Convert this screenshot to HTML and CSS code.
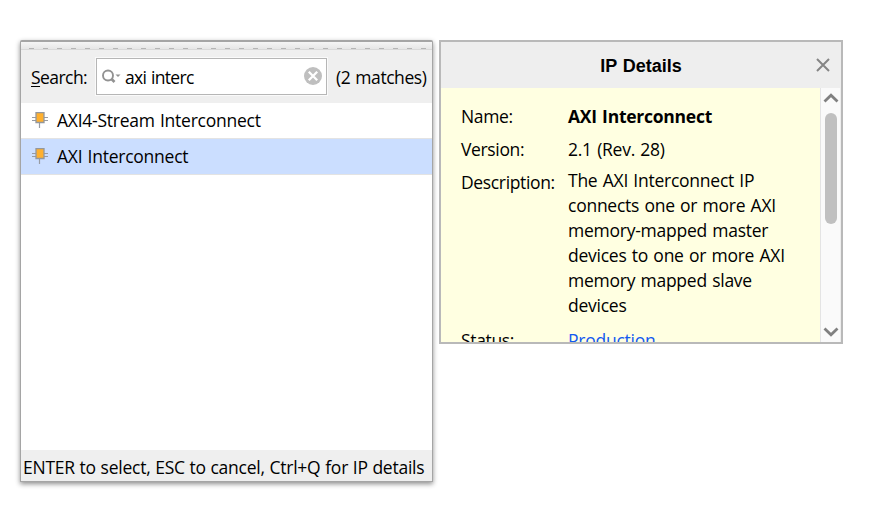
FILE: index.html
```html
<!DOCTYPE html>
<html lang="en">
<head>
<meta charset="utf-8">
<title>IP Catalog Search</title>
<link rel="stylesheet" href="styles.css">
</head>
<body>
<main class="workspace">
  <section class="finder">
    <div class="grip"></div>
    <div class="search-bar">
      <label class="search-label"><u>S</u>earch:</label>
      <div class="search-field">
        <svg class="search-icon" width="20" height="16" viewBox="0 0 20 16"><circle cx="6" cy="6.5" r="5" fill="none" stroke="#929292" stroke-width="1.9"/><path d="M9.500 10l3 3" stroke="#929292" stroke-width="2.6"/><path d="M13.500 5.500h5l-2.500 2.500z" fill="#929292"/></svg>
        <span class="query">axi interc</span>
        <svg class="clear-icon" width="18" height="18" viewBox="0 0 18 18"><circle cx="9" cy="9" r="9" fill="#bfbfbf"/><path d="M4.8 4.8l8.4 8.4M13.2 4.8l-8.4 8.4" stroke="#fff" stroke-width="2.3"/></svg>
      </div>
      <span class="matches">(2 matches)</span>
    </div>
    <ul class="results">
      <li class="result">
        <svg class="chip" width="16" height="16" viewBox="0 0 16 16"><path d="M0 5.500h16M0 8.500h16M7.500 10v6" stroke="#989ca3" stroke-width="1.2"/><path d="M4 .5h8v10H4z" fill="#ffb02e" stroke="#94979c" stroke-width="1.3"/></svg>
        <span class="result-name">AXI4-Stream Interconnect</span>
      </li>
      <li class="result selected">
        <svg class="chip" width="16" height="16" viewBox="0 0 16 16"><path d="M0 5.500h16M0 8.500h16M7.500 10v6" stroke="#989ca3" stroke-width="1.2"/><path d="M4 .5h8v10H4z" fill="#ffb02e" stroke="#94979c" stroke-width="1.3"/></svg>
        <span class="result-name">AXI Interconnect</span>
      </li>
    </ul>
    <footer class="hint">ENTER to select, ESC to cancel, Ctrl+Q for IP details</footer>
  </section>
  <section class="details">
    <header class="details-head">
      <h1>IP Details</h1>
      <svg class="close" width="14" height="14" viewBox="0 0 14 14"><path d="M1 1l12 12M13 1L1 13" stroke="#858585" stroke-width="2"/></svg>
    </header>
    <div class="details-body">
      <dl class="facts">
        <dt>Name:</dt><dd class="strong">AXI Interconnect</dd>
        <dt>Version:</dt><dd>2.1 (Rev. 28)</dd>
        <dt>Description:</dt><dd class="description">The AXI Interconnect IP<br>connects one or more AXI<br>memory-mapped master<br>devices to one or more AXI<br>memory mapped slave<br>devices</dd>
        <dt>Status:</dt><dd class="link">Production</dd>
      </dl>
      <div class="scrollbar">
        <svg width="16" height="10" viewBox="0 0 16 10"><path d="M1.500 8.500L8 2.200l6.500 6.300" fill="none" stroke="#808080" stroke-width="2.8"/></svg>
        <div class="thumb"></div>
        <svg width="16" height="10" viewBox="0 0 16 10"><path d="M1.500 1.500L8 7.800l6.500-6.300" fill="none" stroke="#808080" stroke-width="2.8"/></svg>
      </div>
    </div>
  </section>
</main>
</body>
</html>
```
FILE: styles.css
```css
* { box-sizing: border-box; }
body {
  margin: 0;
  background: #fff;
  color: #000;
  font: 17.5px/24px "Open Sans", "Noto Sans", sans-serif;
  letter-spacing: -0.25px;
  word-spacing: 1px;
  white-space: nowrap;
}
.workspace {
  display: flex;
  align-items: flex-start;
  gap: 6px;
  min-height: 100vh;
  padding: 40px 0 0 20px;
}
.finder {
  display: flex;
  flex-direction: column;
  width: 413px;
  height: 442px;
  border: 1px solid #a5a5a5;
  border-top-width: 2px;
  border-radius: 2px 2px 0 0;
  background: #fff;
  box-shadow: 0 2px 5px rgba(0, 0, 0, .45);
}
.grip {
  flex: none;
  height: 8px;
  border-bottom: 1px solid #d9d9d9;
  background:
    repeating-linear-gradient(90deg, transparent 0 8px, #b5b5b5 8px 13px, transparent 13px 14px) 0 6px / 100% 1px no-repeat,
    linear-gradient(#f5f5f5, #e6e6e6);
}
.search-bar {
  display: flex;
  flex: none;
  align-items: center;
  height: 53px;
  padding-left: 10px;
  background: #efefef;
}
.search-label { width: 65px; letter-spacing: -0.55px; }
.search-label u { text-decoration-thickness: 1px; text-underline-offset: 2px; }
.search-field {
  display: flex;
  align-items: center;
  width: 231px;
  height: 37px;
  padding: 0 4px 0 5px;
  border: 1px solid #b6b6b6;
  outline: 1px solid #fafafa;
  background: #fff;
}
.search-icon { margin-right: 3px; }
.query { flex: 1; letter-spacing: -0.7px; }
.clear-icon { margin-top: -2px; }
.matches { margin-left: 9px; letter-spacing: -0.45px; }
.results {
  flex: 1;
  margin: 0;
  padding: 0;
  list-style: none;
}
.result {
  display: flex;
  align-items: center;
  height: 36px;
  padding-left: 11px;
  border-bottom: 1px solid #e3e3e3;
}
.result-name { margin-top: -2px; }
.selected { background: #cbdeff; }
.chip { margin: -2px 9px 0 0; }
.hint {
  height: 31px;
  padding: 5px 0 0 2px;
  background: #efefef;
  letter-spacing: -0.24px;
  word-spacing: 0.4px;
}
.details {
  width: 404px;
  height: 304px;
  border: 2px solid #b9b9b9;
  overflow: hidden;
}
.details-head {
  display: grid;
  grid-template-columns: 1fr 25px;
  align-items: center;
  height: 46px;
  background: #eee;
}
.details-head h1 {
  margin: 2px 0 0 25px;
  font: bold 18px/22px "Liberation Sans", Arial, sans-serif;
  letter-spacing: 0;
  text-align: center;
}
.details-body { display: flex; height: 254px; }
.facts {
  display: grid;
  flex: 1;
  grid-template-columns: 107px 1fr;
  grid-template-rows: 33px 33px 158px 30px;
  margin: 0;
  padding: 16px 0 0 20px;
  background: #ffffe1;
}
.facts dt { letter-spacing: -0.35px; }
.facts dd { margin: 0; }
.facts .description { margin-top: -2px; line-height: 25px; }
.strong { font-weight: 700; }
.link { color: #1259f0; }
.scrollbar {
  display: flex;
  flex-direction: column;
  align-items: center;
  width: 21px;
  padding: 5px 0;
  border-left: 1px solid #e4e4e4;
  border-right: 1px solid #eee;
  background: #fafafa;
}
.thumb {
  width: 12px;
  height: 111px;
  margin: 10px 0 auto;
  border-radius: 6px;
  background: #c0c0c0;
}
```
